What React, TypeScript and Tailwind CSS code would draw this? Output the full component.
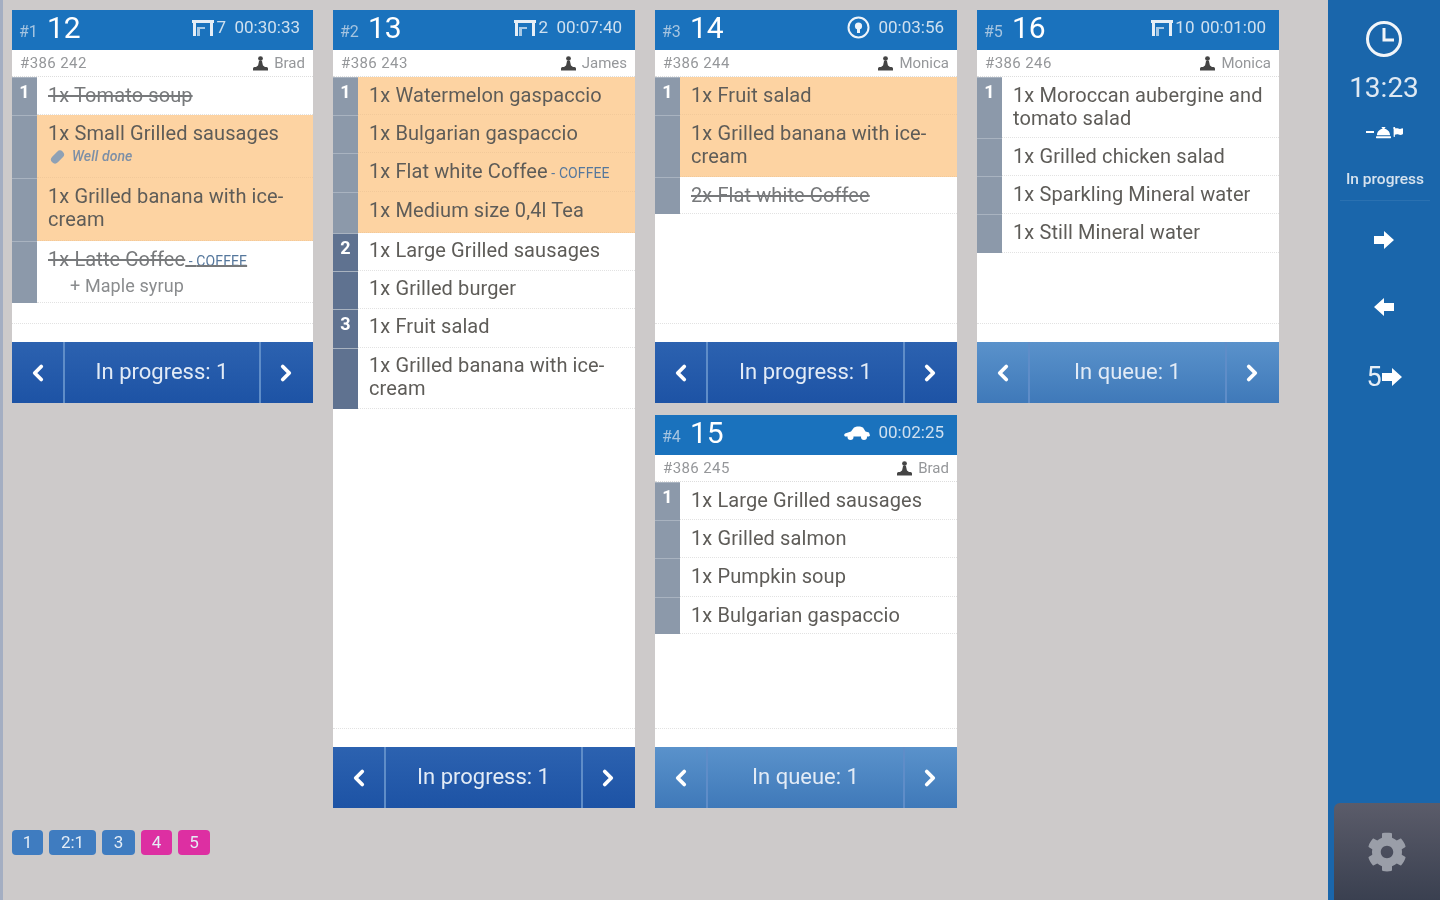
import { ChevronLeft, ChevronRight } from "lucide-react";
import { FaCog, FaConciergeBell, FaFlag } from "react-icons/fa";

interface Item {
  text: string;
  height: number;
  seat?: string;
  struck?: boolean;
  active?: boolean;
  dark?: boolean;
  note?: string;
  addon?: string;
  tag?: string;
}

interface Ticket {
  index: number;
  table: number;
  mode: "table" | "pickup" | "car";
  seats?: string;
  time: string;
  code: string;
  waiter: string;
  status: string;
  queued?: boolean;
  items: Item[];
}

const ticketOne: Ticket = {
  index: 1,
  table: 12,
  mode: "table",
  seats: "7",
  time: "00:30:33",
  code: "#386 242",
  waiter: "Brad",
  status: "In progress: 1",
  items: [
    { text: "1x Tomato soup", height: 38, seat: "1", struck: true },
    { text: "1x Small Grilled sausages", height: 63, active: true, note: "Well done" },
    { text: "1x Grilled banana with ice-cream", height: 63, active: true },
    { text: "1x Latte Coffee", height: 62, struck: true, tag: "COFFEE", addon: "+ Maple syrup" },
  ],
};

const ticketTwo: Ticket = {
  index: 2,
  table: 13,
  mode: "table",
  seats: "2",
  time: "00:07:40",
  code: "#386 243",
  waiter: "James",
  status: "In progress: 1",
  items: [
    { text: "1x Watermelon gaspaccio", height: 38, seat: "1", active: true },
    { text: "1x Bulgarian gaspaccio", height: 38, active: true },
    { text: "1x Flat white Coffee", height: 39, active: true, tag: "COFFEE" },
    { text: "1x Medium size 0,4l Tea", height: 41, active: true },
    { text: "1x Large Grilled sausages", height: 38, seat: "2", dark: true },
    { text: "1x Grilled burger", height: 38, dark: true },
    { text: "1x Fruit salad", height: 39, seat: "3", dark: true },
    { text: "1x Grilled banana with ice-cream", height: 61, dark: true },
  ],
};

const ticketThree: Ticket = {
  index: 3,
  table: 14,
  mode: "pickup",
  time: "00:03:56",
  code: "#386 244",
  waiter: "Monica",
  status: "In progress: 1",
  items: [
    { text: "1x Fruit salad", height: 38, seat: "1", active: true },
    { text: "1x Grilled banana with ice-cream", height: 62, active: true },
    { text: "2x Flat white Coffee", height: 37, struck: true },
  ],
};

const ticketFour: Ticket = {
  index: 4,
  table: 15,
  mode: "car",
  time: "00:02:25",
  code: "#386 245",
  waiter: "Brad",
  status: "In queue: 1",
  queued: true,
  items: [
    { text: "1x Large Grilled sausages", height: 38, seat: "1" },
    { text: "1x Grilled salmon", height: 38 },
    { text: "1x Pumpkin soup", height: 39 },
    { text: "1x Bulgarian gaspaccio", height: 37 },
  ],
};

const ticketFive: Ticket = {
  index: 5,
  table: 16,
  mode: "table",
  seats: "10",
  time: "00:01:00",
  code: "#386 246",
  waiter: "Monica",
  status: "In queue: 1",
  queued: true,
  items: [
    { text: "1x Moroccan aubergine and tomato salad", height: 61, seat: "1" },
    { text: "1x Grilled chicken salad", height: 38 },
    { text: "1x Sparkling Mineral water", height: 38 },
    { text: "1x Still Mineral water", height: 39 },
  ],
};

function TableIcon() {
  return (
    <svg width="22" height="16" viewBox="0 0 22 16" fill="#e6eef6">
      <path d="M0 0h22v3H0zM1 3h3v13H1zM18 3h3v13h-3z" />
      <path d="M5 7h8v2H8v7H5z" opacity="0.7" />
    </svg>
  );
}

function PickupIcon() {
  return (
    <svg width="23" height="23" viewBox="0 0 23 23" fill="none">
      <circle cx="11.5" cy="11.5" r="10" stroke="#eef4fa" strokeWidth="2" />
      <circle cx="11.5" cy="10" r="3.6" fill="#eef4fa" />
      <path d="M10 12h3v5h-3z" fill="#eef4fa" />
    </svg>
  );
}

function CarIcon() {
  return (
    <svg width="26" height="14" viewBox="0 0 26 14" fill="#fff">
      <path d="M1 7.500 7 5.500 10 1.500C12 0 17 0 19 1.500L21.500 5.500 25 6.500 26 9.500 25 10.500H1L0 9z" />
      <circle cx="6.500" cy="11" r="3" />
      <circle cx="20" cy="11" r="3" />
    </svg>
  );
}

function WaiterIcon() {
  return (
    <svg width="15" height="15" viewBox="0 0 15 15" fill="#444">
      <circle cx="7.5" cy="2.6" r="2.4" />
      <path d="M6 5h3l1 5H5z" />
      <path d="M5 9.500h5l2 1.500h1.500a1.500 1.500 0 0 1 1.500 1.500V14.500H0v-2A1.500 1.500 0 0 1 1.500 11H3z" />
    </svg>
  );
}

function FatArrow({ left = false }: { left?: boolean }) {
  return (
    <svg width="20" height="18" viewBox="0 0 20 18" fill="#fff" className={left ? "rotate-180" : ""}>
      <path d="M0 5h10V0l10 9-10 9v-5H0z" />
    </svg>
  );
}

function TicketRow({ item }: { item: Item }) {
  const bar = item.dark ? "bg-[#5f7290]" : "bg-[#8c99aa]";
  const ink = item.struck ? "text-[#77797b] line-through" : "text-[#5e5c58]";
  return (
    <div className="flex" style={{ height: item.height }}>
      <div className={`w-[25px] shrink-0 border-t border-[#a9b3c0] text-center text-[18px] leading-[28px] font-bold text-white ${bar}`}>
        {item.seat}
      </div>
      <div
        className={`min-w-0 flex-1 border-b border-dotted pr-2 pl-[11px] text-[20px] leading-[23px] tracking-[0.1px] ${
          item.dark ? "pt-[6px]" : "pt-[7px]"
        } ${item.active ? "border-[#f2c99a] bg-[#fdd3a2]" : "border-[#e2e2e2] bg-white"}`}
      >
        <div className={ink}>
          {item.text}
          {item.tag ? <span className="text-[14px] text-[#55779c]"> - {item.tag}</span> : null}
        </div>
        {item.note ? (
          <div className="mt-[3px] flex items-center gap-[7px] text-[14px] leading-[17px] font-medium text-[#7d8fa6] italic">
            <span className="ml-[2px] h-[8px] w-[15px] -rotate-45 rounded-[4px] bg-[#8fa1b5]" />
            {item.note}
          </div>
        ) : null}
        {item.addon ? <div className="pl-[22px] text-[18px] leading-[26px] text-[#8a8c8e]">{item.addon}</div> : null}
      </div>
    </div>
  );
}

function TicketCard({ ticket, grow = false }: { ticket: Ticket; grow?: boolean }) {
  const footer = ticket.queued ? "from-[#5a92cb] to-[#3f79b9]" : "from-[#2c62b0] to-[#1d53a5]";
  return (
    <div className={`flex flex-col bg-white ${grow ? "h-[798px]" : "h-[393px]"}`}>
      <div className="flex h-[40px] shrink-0 items-center bg-[#1a72bd] pr-[13px] pb-[5px] pl-[7px] text-[#cfe0ef]">
        <span className="mt-[9px] w-[22px] text-[16px] text-[#a5c4e0]">#{ticket.index}</span>
        <span className="ml-[6px] text-[30px] leading-none text-white">{ticket.table}</span>
        <div className="ml-auto flex items-center gap-[2px] text-[17px]">
          {ticket.mode === "table" ? <TableIcon /> : null}
          {ticket.mode === "pickup" ? <PickupIcon /> : null}
          {ticket.mode === "car" ? <CarIcon /> : null}
          {ticket.seats ? <span className="min-w-[12px]">{ticket.seats}</span> : null}
          <span className={ticket.seats ? "ml-[4px]" : "ml-[6px]"}>{ticket.time}</span>
        </div>
      </div>
      <div className="flex h-[27px] shrink-0 items-center justify-between border-b border-dotted border-[#dddddd] pr-2 pl-2 text-[15px] text-[#95979a]">
        <span className="tracking-[0.4px]">{ticket.code}</span>
        <span className="flex items-center gap-[6px]">
          <WaiterIcon />
          {ticket.waiter}
        </span>
      </div>
      <div className="min-h-0 flex-1">
        {ticket.items.map((item) => (
          <TicketRow key={item.text} item={item} />
        ))}
      </div>
      <div className="mb-[18px] border-b border-dotted border-[#e2e2e2]" />
      <div className={`flex h-[61px] shrink-0 items-stretch bg-gradient-to-b text-[#e2ebf6] ${footer}`}>
        <div className="flex w-[53px] items-center justify-center border-r-2 border-[#5f8dc8]">
          <ChevronLeft size={26} strokeWidth={3.5} className="text-white" />
        </div>
        <div className="flex flex-1 items-center justify-center pb-[2px] text-[22px]">{ticket.status}</div>
        <div className="flex w-[54px] items-center justify-center border-l-2 border-[#5f8dc8]">
          <ChevronRight size={26} strokeWidth={3.5} className="mr-[2px] text-white" />
        </div>
      </div>
    </div>
  );
}

const pages = [
  { label: "1", color: "bg-[#3f7cc0]", width: "w-[31px]" },
  { label: "2:1", color: "bg-[#3f7cc0]", width: "w-[47px]" },
  { label: "3", color: "bg-[#3f7cc0]", width: "w-[33px]" },
  { label: "4", color: "bg-[#dd2fa2]", width: "w-[31px]" },
  { label: "5", color: "bg-[#dd2fa2]", width: "w-[32px]" },
];

export default function App() {
  return (
    <div className="flex h-[900px] w-[1440px] overflow-hidden bg-[#cdcaca] blur-[0.7px]" style={{ fontFamily: "Roboto, sans-serif" }}>
      <div className="w-[3px] shrink-0 bg-[#a4aec2]" />
      <main className="min-w-0 flex-1 pt-[10px] pl-[9px]">
        <div className="flex gap-5">
          <div className="w-[301px]">
            <TicketCard ticket={ticketOne} />
          </div>
          <div className="w-[302px]">
            <TicketCard ticket={ticketTwo} grow />
          </div>
          <div className="flex w-[302px] flex-col gap-3">
            <TicketCard ticket={ticketThree} />
            <TicketCard ticket={ticketFour} />
          </div>
          <div className="w-[302px]">
            <TicketCard ticket={ticketFive} />
          </div>
        </div>
        <div className="mt-[22px] flex gap-[6px]">
          {pages.map((page) => (
            <div
              key={page.label}
              className={`flex h-[25px] items-center justify-center rounded-[4px] text-[17px] text-[#e4edf6] ${page.color} ${page.width}`}
            >
              {page.label}
            </div>
          ))}
        </div>
      </main>
      <aside className="flex w-[112px] shrink-0 flex-col bg-[#1a66ab] text-white">
        <div className="flex flex-1 flex-col items-center">
          <svg width="38" height="38" viewBox="0 0 38 38" fill="none" stroke="#f1f5f9" strokeWidth="3" className="mt-5">
            <circle cx="19" cy="19" r="16.500" />
            <path d="M19 8v12h10" />
          </svg>
          <div className="mt-[13px] text-[28px] leading-[34px] text-[#dfe9f3]">13:23</div>
          <div className="mt-[18px] flex h-[18px] items-center gap-[2px]">
            <span className="h-[2px] w-[8px] bg-white" />
            <FaConciergeBell className="text-[15px]" />
            <FaFlag className="text-[10px]" />
          </div>
          <div className="mt-[27px] ml-[2px] w-[90px] border-b border-[#2a71b1] pb-[9px] text-center text-[15.5px] font-medium whitespace-nowrap text-[#d5e2ee]">
            In progress
          </div>
          <div className="mt-[30px]">
            <FatArrow />
          </div>
          <div className="mt-[49px]">
            <FatArrow left />
          </div>
          <div className="mt-[45px] flex items-center text-[27px] leading-[32px] text-[#e6eef6]">
            5<FatArrow />
          </div>
        </div>
        <div className="ml-[6px] flex h-[97px] shrink-0 items-center justify-center rounded-tl-[6px] bg-gradient-to-b from-[#5b5c6a] to-[#3a4050]">
          <FaCog className="text-[40px] text-[#9a9ea8]" />
        </div>
      </aside>
    </div>
  );
}
